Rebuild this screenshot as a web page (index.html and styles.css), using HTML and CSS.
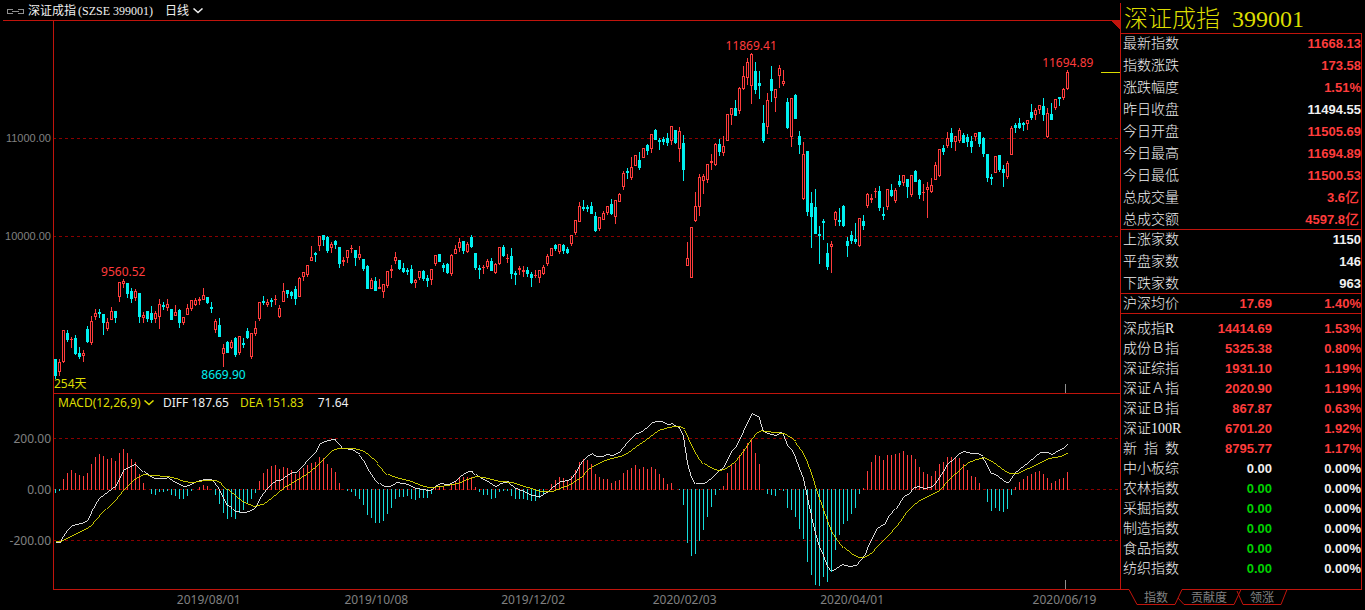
FILE: index.html
```html
<!DOCTYPE html>
<html lang="zh-CN">
<head>
<meta charset="utf-8">
<title>深证成指 399001</title>
<link rel="stylesheet" href="styles.css">
</head>
<body>
<main class="chart">
  <header class="toolbar">
    <svg class="link-icon" width="17" height="5" viewBox="0 0 17 5" aria-hidden="true"><path d="M6 .5H.5v4H6M5 2.5h7M11 .5h5.500v4H11"/></svg>
    <h1 class="toolbar-title">深证成指<span>(SZSE 399001)</span></h1>
    <label class="picker picker-period">
      <select aria-label="周期"><option>日线</option></select>
      <svg width="10" height="6" viewBox="0 0 10 6" aria-hidden="true"><path d="M.5 .5L5 4.500L9.500 .5"/></svg>
    </label>
  </header>
  <div class="pane price-pane">
    <svg id="price" class="plot" viewBox="54 21 1066 372" preserveAspectRatio="none" role="img" aria-label="日线K线图"></svg>
    <span class="axis axis-price axis-11000">11000.00</span>
    <span class="axis axis-price axis-10000">10000.00</span>
    <span class="mark up mark-a">9560.52</span>
    <span class="mark down mark-b">8669.90</span>
    <span class="mark up mark-c">11869.41</span>
    <span class="mark up mark-d">11694.89</span>
    <span class="days">254天</span>
  </div>
  <div class="pane macd-pane">
    <div class="legend">
      <label class="picker picker-macd">
        <select aria-label="指标"><option>MACD(12,26,9)</option></select>
        <svg width="10" height="6" viewBox="0 0 10 6" aria-hidden="true"><path d="M.5 .5L5 4.500L9.500 .5"/></svg>
      </label>
      <span class="diff">DIFF 187.65</span>
      <span class="dea">DEA 151.83</span>
      <span class="macd">71.64</span>
    </div>
    <div class="macd-body">
      <svg id="macd" class="plot" viewBox="54 412 1066 177" preserveAspectRatio="none" role="img" aria-label="MACD"></svg>
      <span class="axis axis-p200">200.00</span>
      <span class="axis axis-zero">0.00</span>
      <span class="axis axis-m200">-200.00</span>
    </div>
  </div>
  <footer class="dates">
    <span class="date date-1">2019/08/01</span>
    <span class="date date-2">2019/10/08</span>
    <span class="date date-3">2019/12/02</span>
    <span class="date date-4">2020/02/03</span>
    <span class="date date-5">2020/04/01</span>
    <span class="date date-6">2020/06/19</span>
  </footer>
</main>
<aside class="quote">
  <div class="quote-body">
    <h2 class="quote-title"><span>深证成指</span><span>399001</span></h2>
    <div class="quote-tables">
      <table class="stats">
        <tr><th scope="row">最新指数</th><td class="up">11668.13</td></tr>
        <tr><th scope="row">指数涨跌</th><td class="up">173.58</td></tr>
        <tr><th scope="row">涨跌幅度</th><td class="up">1.51%</td></tr>
        <tr><th scope="row">昨日收盘</th><td>11494.55</td></tr>
        <tr><th scope="row">今日开盘</th><td class="up">11505.69</td></tr>
        <tr><th scope="row">今日最高</th><td class="up">11694.89</td></tr>
        <tr><th scope="row">今日最低</th><td class="up">11500.53</td></tr>
        <tr><th scope="row">总成交量</th><td class="up">3.6<span class="unit">亿</span></td></tr>
        <tr><th scope="row">总成交额</th><td class="up">4597.8<span class="unit">亿</span></td></tr>
      </table>
      <table class="stats">
        <tr><th scope="row">上涨家数</th><td>1150</td></tr>
        <tr><th scope="row">平盘家数</th><td>146</td></tr>
        <tr><th scope="row">下跌家数</th><td>963</td></tr>
      </table>
      <table class="stats">
        <tr><th scope="row">沪深均价</th><td class="up">17.69</td><td class="up pct">1.40%</td></tr>
      </table>
      <table class="stats indices">
        <tr><th scope="row">深成指R</th><td class="up">14414.69</td><td class="up pct">1.53%</td></tr>
        <tr><th scope="row">成份Ｂ指</th><td class="up">5325.38</td><td class="up pct">0.80%</td></tr>
        <tr><th scope="row">深证综指</th><td class="up">1931.10</td><td class="up pct">1.19%</td></tr>
        <tr><th scope="row">深证Ａ指</th><td class="up">2020.90</td><td class="up pct">1.19%</td></tr>
        <tr><th scope="row">深证Ｂ指</th><td class="up">867.87</td><td class="up pct">0.63%</td></tr>
        <tr><th scope="row">深证100R</th><td class="up">6701.20</td><td class="up pct">1.92%</td></tr>
        <tr><th scope="row" class="spaced"><span>新</span><span>指</span><span>数</span></th><td class="up">8795.77</td><td class="up pct">1.17%</td></tr>
        <tr><th scope="row">中小板综</th><td>0.00</td><td class="pct">0.00%</td></tr>
        <tr><th scope="row">农林指数</th><td class="flat">0.00</td><td class="pct">0.00%</td></tr>
        <tr><th scope="row">采掘指数</th><td class="flat">0.00</td><td class="pct">0.00%</td></tr>
        <tr><th scope="row">制造指数</th><td class="flat">0.00</td><td class="pct">0.00%</td></tr>
        <tr><th scope="row">食品指数</th><td class="flat">0.00</td><td class="pct">0.00%</td></tr>
        <tr><th scope="row">纺织指数</th><td class="flat">0.00</td><td class="pct">0.00%</td></tr>
      </table>
    </div>
  </div>
  <nav class="tabs">
    <svg class="tabs-frame" width="242" height="17" viewBox="0 0 242 17" aria-hidden="true"><path d="M0 .5H9L17 15.500H55L62 .5H242M58 9L64 15.500H114L121 .5M117 2L123 15.500H161L167 .5"/></svg>
    <button type="button">指数</button>
    <button type="button">贡献度</button>
    <button type="button">领涨</button>
  </nav>
</aside>
<script src="chart.js"></script>
</body>
</html>
```
FILE: styles.css
```css
* { box-sizing: border-box; }

:root {
  --line: #c0140c;
  --up: #ff3c3c;
  --down: #00f0f0;
  --text: #f0f0f0;
  --muted: #808080;
  --yellow: #dcdc00;
}

body {
  margin: 0;
  min-height: 100vh;
  display: grid;
  grid-template-columns: minmax(0, 1fr) 245px;
  background: #000;
  color: var(--text);
  font: 12px/18px "Noto Sans", "Noto Sans CJK SC", sans-serif;
}

/* chart column */
.chart {
  display: grid;
  grid-template-rows: 20px minmax(373px, 373fr) minmax(196px, 196fr) 21px;
}

.toolbar {
  display: flex;
  align-items: center;
  margin-left: 3px;
  padding-left: 4px;
  padding-top: 2px;
}

.toolbar-title {
  margin: 0 0 0 4px;
  font: 12px/18px "Liberation Serif", "Noto Sans CJK SC", serif;
}
.toolbar-title span { margin-left: 2px; }

.link-icon path { fill: none; stroke: #909090; shape-rendering: crispEdges; }

.picker { display: flex; align-items: center; gap: 3px; }
.picker select {
  appearance: none;
  border: 0;
  padding: 0;
  background: #000;
  color: inherit;
  font: inherit;
}
.picker svg { fill: none; stroke: currentColor; stroke-width: 1.5; pointer-events: none; }
.picker-period { margin-left: 12px; }
.picker-macd { color: var(--yellow); margin-right: 9px; }

.pane {
  position: relative;
  margin-left: 53px;
  border-left: 1px solid var(--line);
  border-top: 1px solid var(--line);
}
.price-pane::before {
  content: "";
  position: absolute;
  left: -51px;
  top: -1px;
  width: 50px;
  height: 1px;
  background: var(--line);
}
.plot { position: absolute; inset: 0; width: 100%; height: 100%; display: block; }
.macd-pane { display: flex; flex-direction: column; }
.macd-body { position: relative; flex: 1; }

.legend { display: flex; height: 18px; padding-left: 4px; }
.diff { margin-right: 11px; }
.dea { color: var(--yellow); margin-right: 14px; }

.axis {
  position: absolute;
  right: 100%;
  margin-right: 3px;
  transform: translateY(-50%);
  color: var(--muted);
}
.axis-price { font-family: "Liberation Sans", sans-serif; font-size: 11px; }
.axis-11000 { top: 31.5%; }
.axis-10000 { top: 57.8%; }
.axis-p200 { top: 15%; }
.axis-zero { top: 44%; }
.axis-m200 { top: 73%; }

.up { color: var(--up); }
.down { color: var(--down); }
.flat { color: #00d200; }

.mark { position: absolute; transform: translate(-50%, -50%); }
.mark-a { left: 6.5%; top: 67.5%; }
.mark-b { left: 15.9%; top: 95.2%; }
.mark-c { left: 65.4%; top: 6.7%; }
.mark-d { left: 95.1%; top: 11.3%; }
.days { position: absolute; left: 0; bottom: 0; color: var(--yellow); }

.dates {
  position: relative;
  margin-left: 53px;
  border-top: 1px solid var(--line);
  color: var(--muted);
}
.date { position: absolute; top: 1px; transform: translateX(-50%); }
.date-1 { left: 14.6%; }
.date-2 { left: 30.3%; }
.date-3 { left: 45%; }
.date-4 { left: 59.2%; }
.date-5 { left: 74.9%; }
.date-6 { left: 94.8%; }

/* quote column */
.quote { display: flex; flex-direction: column; }
.quote-body {
  flex: 1;
  margin-top: 3px;
  border-left: 1px solid var(--line);
}
.quote-title {
  display: flex;
  gap: 12px;
  margin: 0;
  padding-left: 3px;
  height: 30px;
  color: var(--yellow);
  font: 300 24px/32px "Liberation Serif", "Noto Sans CJK SC", serif;
}
.quote-tables {
  margin-right: 3px;
  height: calc(100% - 30px);
  border-right: 1px solid var(--line);
}
.stats {
  width: 100%;
  border-spacing: 0;
  border-collapse: separate;
  border-top: 1px solid var(--line);
  line-height: 19px;
}
.stats th, .stats td { padding: 0 0 3px; }
.stats tr:last-child > * { padding-bottom: 0; }
.stats th {
  width: 62px;
  padding-left: 2px;
  text-align: left;
  white-space: nowrap;
  font: 300 14px/19px "Liberation Serif", "Noto Sans CJK SC", serif;
}
.stats td {
  text-align: right;
  font: bold 13px/19px "Liberation Sans", "Noto Sans CJK SC", sans-serif;
}
.stats .pct { width: 89px; }
.unit { padding-right: 2px; font-size: 14px; line-height: 1; font-weight: 500; }
.indices { padding-top: 4px; }
.indices tr > * { padding-bottom: 0; height: 20px; }
.spaced span + span { margin-left: 7px; }

.tabs { position: relative; display: flex; gap: 23px; height: 21px; padding-left: 24px; }
.tabs-frame { position: absolute; left: 0; top: 0; fill: none; stroke: var(--line); }
.tabs button {
  position: relative;
  height: 16px;
  padding: 0;
  border: 0;
  background: none;
  color: var(--muted);
  font: 12px/16px "Noto Sans CJK SC", sans-serif;
}
```
FILE: chart.js
```js
// One candle per item: direction (r = up, c = down), high, body top, body bottom, low.
const candles = `
c 359 359 376 379|r 359 362 372 376|r 330 330 362 363|c 330 333 340 342|r 337 339 340 348|c 335 338 354 355
c 347 353 357 359|r 350 353 356 362|c 326 329 342 343|r 316 321 343 345|r 309 313 317 320|c 309 312 314 318
c 314 314 323 335|r 318 322 329 331|r 307 311 320 320|c 311 311 318 323|r 282 282 297 302|r 279 281 284 288
c 283 283 294 298|c 288 291 299 303|r 289 291 298 301|c 293 293 317 323|r 312 315 318 323|c 311 311 319 322
c 306 313 320 323|r 311 313 319 323|r 299 304 317 329|c 302 305 307 310|r 299 304 308 311|c 309 309 320 320
r 305 312 316 316|c 309 310 323 328|r 317 317 323 325|r 304 308 315 315|r 300 300 309 311|r 298 300 305 306
r 297 299 301 305|r 288 295 300 300|c 297 297 303 304|c 302 307 309 313|r 319 321 330 333|c 318 325 337 337
r 344 348 354 367|c 341 342 353 353|r 340 342 348 349|c 337 338 355 357|r 336 336 353 355|c 338 343 345 348
c 328 331 338 339|r 333 333 357 359|r 321 328 334 336|r 302 302 319 321|c 296 301 303 305|r 299 302 305 307
c 298 300 302 307|r 295 299 300 305|r 305 308 317 318|r 283 291 302 302|c 290 290 294 298|c 291 292 296 299
c 286 289 299 305|r 277 278 297 297|r 272 272 277 281|r 265 265 275 277|r 246 257 261 261|c 252 253 255 262
r 236 236 246 251|c 235 235 240 246|c 236 237 251 253|r 242 244 248 253|c 240 241 245 249|c 247 247 264 268
r 257 260 262 266|r 250 250 258 263|r 245 248 249 253|c 250 250 258 266|r 246 254 258 260|c 259 259 269 271
c 265 266 289 289|r 278 280 289 289|c 277 281 291 291|r 279 287 289 289|r 284 284 292 298|r 271 271 286 288
r 265 269 271 278|r 252 257 261 264|c 260 260 269 270|c 263 268 272 273|c 268 270 272 275|c 265 269 283 284
r 279 280 283 288|r 271 271 278 280|c 270 271 279 281|c 275 278 281 287|r 269 269 280 285|r 255 255 264 266
c 254 254 262 262|c 263 265 268 272|c 263 264 273 274|r 254 255 274 276|r 245 249 254 254|r 238 242 248 252
c 241 241 251 254|r 242 244 252 253|c 235 237 247 248|c 253 253 268 270|c 265 268 270 279|r 265 267 268 274
r 259 261 267 269|c 258 261 271 271|r 263 264 273 274|r 247 247 264 265|c 245 247 256 257|r 254 258 259 263
c 248 256 274 279|c 271 273 275 285|r 266 268 270 275|r 266 270 272 277|c 267 270 274 277|c 272 274 278 287
r 270 275 276 278|r 270 270 278 283|r 265 267 274 275|r 254 256 264 266|r 248 248 256 256|c 244 245 249 251
r 244 244 252 254|c 244 245 251 254|c 247 249 253 254|r 235 235 244 246|r 220 220 233 235|r 202 206 222 222
c 200 207 209 211|c 205 207 209 212|c 202 206 214 214|c 212 216 231 232|r 217 217 229 231|r 211 213 220 220
r 206 206 213 215|c 199 204 214 215|r 200 200 217 224|r 193 194 202 202|r 171 173 187 190|c 168 171 173 179
r 157 167 178 180|r 155 155 166 166|c 152 160 168 170|r 148 148 158 158|c 144 145 151 155|r 134 134 149 153
c 129 130 140 140|c 138 140 142 150|c 137 139 142 145|c 133 138 143 146|r 126 126 141 145|c 130 130 143 144
r 127 131 149 162|c 135 143 170 181|r 242 258 266 266|r 227 227 278 278|r 192 206 221 222|r 174 177 207 216
r 174 176 181 194|r 164 164 180 183|r 154 161 163 170|r 143 144 165 166|c 139 144 152 156|r 136 146 153 156
r 114 114 141 141|r 108 108 115 125|c 100 108 116 116|r 87 88 111 114|r 66 76 89 90|r 58 62 78 85
r 53 54 86 104|c 62 71 90 94|c 71 83 86 99|c 105 123 141 143|r 93 100 127 134|c 66 79 91 102
r 89 89 98 112|r 65 68 76 88|r 70 81 84 86|c 98 102 128 129|r 98 98 137 147|c 94 95 119 119
c 131 136 145 154|r 142 154 199 200|c 151 151 212 216|c 192 203 217 248|c 189 207 234 234|c 226 234 236 264
c 219 221 223 240|c 243 253 267 270|r 241 244 247 273|r 211 212 220 226|c 208 220 222 226|c 205 206 226 227
c 237 241 246 257|c 231 235 241 244|c 223 239 242 244|r 218 218 246 247|c 215 221 226 230|r 193 194 206 208
r 194 198 200 203|r 188 191 192 198|c 186 191 208 211|c 207 214 216 220|r 189 189 207 210|c 184 190 196 197
r 188 190 201 203|c 175 181 185 187|r 175 175 183 186|c 179 179 187 198|r 175 175 195 197|c 170 171 182 182
c 179 180 195 199|r 184 192 193 201|r 182 187 190 218|r 178 185 192 193|r 162 165 180 180|r 149 149 176 177
c 145 148 152 155|r 132 138 146 148|c 128 133 142 148|r 136 136 142 151|r 128 130 141 143|c 133 135 143 143
c 134 137 142 147|c 136 141 147 153|r 133 133 137 141|c 132 132 144 147|c 137 138 154 157|c 154 154 178 182
c 174 177 179 185|r 156 156 173 173|c 155 155 170 172|c 165 169 173 187|r 161 163 177 179|r 126 128 155 155
c 123 125 128 133|c 118 123 128 129|c 122 123 125 131|r 120 120 124 130|c 104 112 118 120|r 108 110 115 120
r 105 105 110 114|c 98 106 115 121|r 108 113 137 138|c 103 114 120 120|r 99 99 108 110|c 97 97 99 106
r 88 89 98 100|r 70 72 89 90`;

// MACD histogram, one bar per candle.
const bars = `-4 -2 10 16 19 16 14 13 16 25 32 35 33 30 31 28 36 40 36 30 27 15 6 0 -5 -6 -3 -3 -2 -6 -7 -10 -10 -7 -2 0 2 4 3 0
-6 -15 -24 -30 -28 -30 -24 -21 -15 -10 -4 8 16 20 23 24 20 22 21 19 15 18 21 24 26 27 32 31 25 21 17 6 0 -2 -3 -7 -10 -16 -26 -29
-34 -34 -32 -25 -19 -10 -8 -8 -7 -10 -11 -9 -9 -9 -5 1 3 2 0 5 8 12 12 12 12 2 -3 -6 -6 -10 -9 -3 -2 -2 -7 -10 -10 -10 -11 -12
-12 -9 -6 0 5 9 12 11 8 13 19 27 30 29 25 15 12 10 10 6 8 9 16 19 21 24 20 22 20 22 20 15 11 5 6 0 -1 -16 -54 -67
-65 -52 -41 -28 -18 -6 -1 3 16 25 26 34 40 46 49 36 25 0 -5 -6 -7 -1 -2 -19 -21 -28 -40 -50 -73 -86 -96 -97 -88 -93 -83 -61 -46 -35 -32 -25
-19 -5 1 18 27 34 33 29 34 34 35 36 38 34 34 30 22 17 15 13 18 25 27 32 32 31 31 25 19 13 12 6 0 -13 -22 -19 -22 -23 -20 -6
2 7 10 13 15 17 18 15 11 6 8 10 11 17`.split(/\s+/).map(Number);

const diff = `55,542 59,542 63,535 67,529 71,525 75,524 83,522 87,519 91,512 95,503 99,497 103,494 107,491 111,488 115,485 119,477 123,469
127,467 131,465 135,463 139,467 143,471 147,474 151,477 155,478 163,478 167,477 171,480 175,482 179,484 183,486 187,485 191,483 195,481
199,480 203,479 209,479 213,480 217,485 221,493 227,505 231,507 235,511 243,512 247,511 255,507 259,498 263,492 267,487 271,483 275,480
279,480 283,477 287,474 291,472 295,472 299,468 303,464 307,459 311,455 315,451 319,443 323,441 327,440 331,439 335,439 339,443 343,448
351,449 359,454 363,459 367,467 371,473 375,479 379,483 383,486 387,486 391,485 395,482 403,483 407,484 415,488 423,489 427,490 431,489
435,485 439,483 447,484 451,482 455,480 459,476 463,473 467,471 472,471 475,474 480,478 487,481 491,484 495,486 499,483 507,481 515,488
523,491 531,495 539,496 543,493 547,491 551,487 555,484 559,481 567,480 571,477 575,472 579,464 583,459 587,455 591,453 595,456 601,456
605,454 612,455 619,451 623,446 627,441 631,437 635,433 639,432 643,429 647,426 651,422 655,421 661,421 667,424 671,423 675,426 679,427
683,435 687,462 691,476 695,483 703,483 711,477 717,471 723,466 727,458 731,450 735,446 739,438 743,430 747,421 751,413 755,415 759,417
763,431 767,433 775,435 779,432 783,433 787,444 791,448 795,456 799,467 803,477 807,496 811,515 815,532 819,545 823,554 827,565 831,570
835,568 841,564 848,566 855,565 860,559 865,553 868,544 872,536 876,528 880,525 884,523 888,516 896,507 903,496 908,493 913,487 917,486
923,488 931,486 935,482 939,476 943,470 947,463 952,459 958,453 963,451 971,453 977,453 982,456 987,464 991,473 996,475 1003,481
1007,482 1012,476 1019,468 1027,462 1035,455 1039,452 1047,452 1051,454 1057,450 1063,447 1067,443`;

const dea = `55,541 59,541 71,535 87,527 91,524 95,519 99,515 107,507 115,499 123,489 131,481 136,477 143,474 150,475 167,476 175,478
183,481 191,482 203,480 215,480 221,483 227,489 235,496 243,502 253,506 262,504 271,497 283,487 295,480 305,474 315,466 323,458 331,450
337,448 353,448 361,450 367,454 377,463 387,474 395,477 410,481 420,485 428,487 440,486 451,484 459,482 463,480 475,476 487,478 499,481
511,482 523,486 533,489 539,491 551,491 561,487 569,484 575,480 581,476 587,469 593,465 601,461 610,458 619,456 627,452 635,446 641,442
649,436 657,430 667,427 673,426 679,426 684,429 688,437 693,448 699,458 703,463 711,468 717,470 723,469 729,465 735,460 743,450 751,438
756,432 760,430 765,431 783,433 791,438 795,441 803,452 807,461 811,472 817,491 823,508 827,519 831,530 837,539 843,547 850,553 857,557
863,557 871,552 876,546 887,535 896,525 903,516 913,504 920,499 930,494 938,490 949,478 960,468 967,462 975,459 983,457 992,462 1003,470
1009,473 1016,473 1027,468 1041,461 1048,458 1059,456 1067,452`;

const UP = "#ff3c3c";
const DOWN = "#00f0f0";
const rect = (x, y, w, h, fill) => `<rect x="${x}" y="${y}" width="${w}" height="${h}" fill="${fill}"/>`;
const grid = y => `<path d="M53 ${y + 0.5}H1120" stroke="#8b0000" stroke-dasharray="3 3"/>`;
const curve = (points, stroke) =>
  `<polyline points="${points}" transform="translate(.5 .5)" fill="none" stroke="${stroke}" stroke-width=".9"/>`;

let price = grid(138) + grid(236);
candles.trim().split(/[|\n]/).forEach((item, i) => {
  const [kind, ...values] = item.split(" ");
  const [high, top, bottom, low] = values.map(Number);
  const x = 55 + i * 4;
  const color = kind === "r" ? UP : DOWN;
  price += rect(x, high, 1, low - high, color) + rect(x - 1, top, 3, bottom - top, color);
  if (kind === "r" && bottom - top > 2) price += rect(x, top + 1, 1, bottom - top - 2, "#000");
});
price += rect(1065, 384, 1, 9, "#909090") + rect(1101, 72, 19, 1, "#dcdc00");
price += `<path d="M1110 20H1120V30Z" fill="#c0140c"/>`;
document.getElementById("price").innerHTML = `<g shape-rendering="crispEdges">${price}</g>`;

let macd = grid(438) + grid(489) + grid(540);
bars.forEach((v, i) => {
  if (v > 0) macd += rect(55 + i * 4, 489 - v, 1, v + 1, UP);
  if (v < 0) macd += rect(55 + i * 4, 489, 1, -v, "#14dcdc");
});
macd += curve(diff, "#f0f0f0") + curve(dea, "#dcdc00") + rect(1065, 580, 1, 9, "#909090");
document.getElementById("macd").innerHTML = `<g shape-rendering="crispEdges">${macd}</g>`;
```
